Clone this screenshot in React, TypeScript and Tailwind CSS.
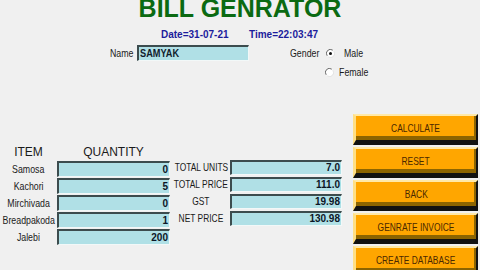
import React from "react";

const arial = "font-['Liberation_Sans',Arial,sans-serif]";
// the screenshot is squeezed sideways, so labels are narrowed with scale-x
const squeeze = "inline-block whitespace-nowrap scale-x-[0.8]";

const items = [
  { name: "Samosa", qty: "0" },
  { name: "Kachori", qty: "5" },
  { name: "Mirchivada", qty: "0" },
  { name: "Breadpakoda", qty: "1" },
  { name: "Jalebi", qty: "200" },
];

const totals = [
  { label: "TOTAL UNITS", value: "7.0" },
  { label: "TOTAL PRICE", value: "111.0" },
  { label: "GST", value: "19.98" },
  { label: "NET PRICE", value: "130.98" },
];

const buttons = ["CALCULATE", "RESET", "BACK", "GENRATE INVOICE", "CREATE DATABASE"];

function Radio({ checked }: { checked?: boolean }) {
  return (
    <svg width="9" height="9" viewBox="0 0 9 9" className="shrink-0">
      <circle cx="4.5" cy="4.5" r="4" fill="#ffffff" />
      <path d="M1.2 6.8 A4 4 0 0 1 6.8 1.2" fill="none" stroke="#6b6b6b" strokeWidth="1" />
      <path d="M7.8 2.2 A4 4 0 0 1 2.2 7.8" fill="none" stroke="#e2e2e2" strokeWidth="1" />
      {checked && <circle cx="4.5" cy="4.5" r="1.5" fill="#111111" />}
    </svg>
  );
}

function Entry({ value, className }: { value: string; className: string }) {
  return (
    <div
      className={`flex items-center justify-end bg-[#b0e0e6] border-t-2 border-l-2 border-b border-r border-t-[#3c4c4e] border-l-[#3c4c4e] border-b-[#f2f8f8] border-r-[#f2f8f8] pr-[1px] ${className}`}
    >
      <span className={`${arial} text-[10px] font-bold leading-none text-[#0c1626]`}>{value}</span>
    </div>
  );
}

export default function App() {
  return (
    <div className={`${arial} w-[480px] h-[270px] overflow-hidden bg-[#f0f0f0] flex flex-col`}>
      {/* Title */}
      <div className="h-[24px] flex justify-center">
        <div className="-mt-[4px] text-[25px] leading-[25px] font-bold text-[#0b6a12]">BILL GENRATOR</div>
      </div>

      {/* Date / time */}
      <div className="mt-[8px] h-[12px] flex items-center pl-[161px] text-[10px] leading-[12px] font-bold text-[#1c1c9c]">
        <span className="w-[88px]">Date=31-07-21</span>
        <span>Time=22:03:47</span>
      </div>

      {/* Name + gender */}
      <div className="mt-[4px] h-[16px] flex items-center pl-[110px] text-[11px] text-[#1a1a1a]">
        <span className="w-[27px]">
          <span className={`${squeeze} origin-left`}>Name</span>
        </span>
        <div className="w-[112px] h-[16px] flex items-center bg-[#b0e0e6] border-t-2 border-l-2 border-b border-r border-t-[#3c4c4e] border-l-[#3c4c4e] border-b-[#f2f8f8] border-r-[#f2f8f8] pl-[1px]">
          <span className={`${squeeze} origin-left text-[11.5px] font-bold leading-none text-[#101c2c]`}>SAMYAK</span>
        </div>
        <span className="ml-[41px] w-[36px]">
          <span className={`${squeeze} origin-left`}>Gender</span>
        </span>
        <Radio checked />
        <span className="ml-[9px]">
          <span className={`${squeeze} origin-left`}>Male</span>
        </span>
      </div>
      <div className="mt-[6px] h-[10px] flex items-center pl-[325px] text-[11px] text-[#1a1a1a]">
        <Radio />
        <span className="ml-[5px]">
          <span className={`${squeeze} origin-left`}>Female</span>
        </span>
      </div>

      {/* Bottom area */}
      <div className="flex items-start">
        {/* Items */}
        <div className="mt-[68px] w-[170px] flex flex-col">
          <div className="h-[14px] flex items-center text-[12px] text-[#1a1a1a]">
            <span className="w-[57px] flex justify-center">ITEM</span>
            <span className="w-[113px] flex justify-center">QUANTITY</span>
          </div>
          <div className="mt-[2px] flex flex-col gap-[1px]">
            {items.map((it) => (
              <div key={it.name} className="flex items-center h-[16px]">
                <span className="w-[57px] flex justify-center text-[11px] text-[#1a1a1a]">
                  <span className={squeeze}>{it.name}</span>
                </span>
                <Entry value={it.qty} className="w-[113px] h-[16px]" />
              </div>
            ))}
          </div>
        </div>

        {/* Totals */}
        <div className="mt-[83px] ml-[2px] w-[170px] flex flex-col gap-[2px]">
          {totals.map((t) => (
            <div key={t.label} className="flex items-center h-[15px]">
              <span className="w-[58px] flex justify-center text-[10.5px] text-[#1a1a1a]">
                <span className={squeeze}>{t.label}</span>
              </span>
              <Entry value={t.value} className="w-[112px] h-[15px]" />
            </div>
          ))}
        </div>

        {/* Buttons */}
        <div className="mt-[37px] ml-[11px] w-[125px] flex flex-col gap-[2px]">
          {buttons.map((b) => (
            <div
              key={b}
              className="h-[31px] flex items-center justify-center bg-[#ffa600] border-t-2 border-l-[3px] border-r-[2px] border-b-[5px] border-t-[#ffe9a8] border-l-[#ffdf85] border-r-[#111] border-b-[#111] shadow-[inset_0_-4px_0_#8c6400,inset_-2px_0_0_#8c6400] pt-[1px]"
            >
              <span className={`${squeeze} text-[10.5px] text-[#4a2800]`}>{b}</span>
            </div>
          ))}
        </div>
      </div>
    </div>
  );
}
